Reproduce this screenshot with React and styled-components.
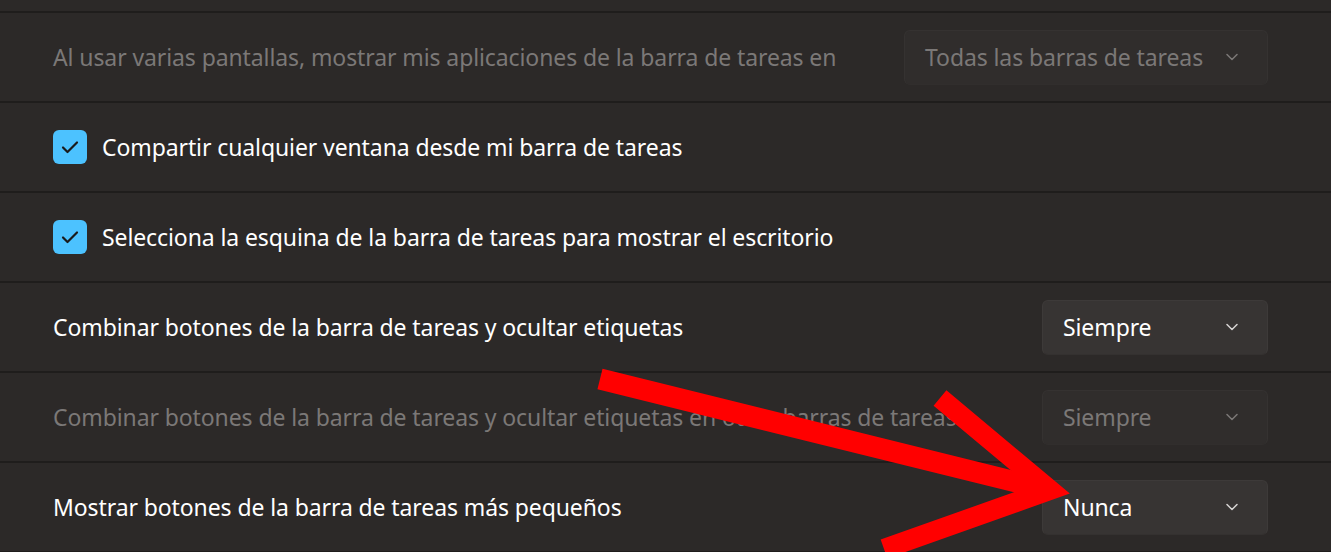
import React from "react";
import styled, { createGlobalStyle } from "styled-components";

const GlobalStyle = createGlobalStyle`
  html, body {
    margin: 0;
    padding: 0;
    background: #1f1d1c;
  }
  body {
    font-family: "Noto Sans", "Open Sans", "Liberation Sans", sans-serif;
    -webkit-font-smoothing: antialiased;
  }
`;

const Page = styled.div`
  position: relative;
  width: 1331px;
  height: 552px;
  overflow: hidden;
  background: #1f1d1c;
`;

const List = styled.div`
  display: flex;
  flex-direction: column;
  gap: 2px;
`;

const CardTail = styled.div`
  height: 11px;
  background: #2c2928;
`;

const Row = styled.div`
  height: 88px;
  box-sizing: border-box;
  padding: 0 63px 0 53px;
  display: flex;
  align-items: center;
  justify-content: space-between;
  background: #2c2928;
`;

const Left = styled.div`
  display: flex;
  align-items: center;
  gap: 15px;
`;

const Label = styled.span`
  font-size: 23px;
  letter-spacing: -0.1px;
  color: ${(p) => (p.$disabled ? "#7b7877" : "#ffffff")};
  white-space: nowrap;
`;

const Check = styled.span`
  width: 34px;
  height: 34px;
  border-radius: 6px;
  background: #4cc2ff;
  display: flex;
  align-items: center;
  justify-content: center;
  flex: none;
`;

const Select = styled.div`
  width: ${(p) => p.$width}px;
  height: 55px;
  box-sizing: border-box;
  display: flex;
  align-items: center;
  padding: 0 29px 0 20px;
  border-radius: 6px;
  border: 1px solid ${(p) => (p.$disabled ? "#353231" : "#3d3a39")};
  border-bottom-color: ${(p) => (p.$disabled ? "#312e2d" : "#343130")};
  background: ${(p) => (p.$disabled ? "#302d2c" : "#373433")};
  flex: none;
`;

const SelectText = styled.span`
  font-size: 23px;
  letter-spacing: -0.1px;
  color: ${(p) => (p.$disabled ? "#7b7877" : "#ffffff")};
  white-space: nowrap;
`;

const Chevron = styled.svg`
  margin-left: auto;
  width: 12px;
  height: 8px;
  flex: none;
`;

const Overlay = styled.svg`
  position: absolute;
  left: 0;
  top: 0;
  width: 1331px;
  height: 552px;
  pointer-events: none;
`;

const CheckIcon = () => (
  <Check>
    <svg width="18" height="14" viewBox="0 0 18 14">
      <path d="M2 7.5 L6.5 12 L16 2.5" fill="none" stroke="#1a1a1a" strokeWidth="2.2" strokeLinecap="round" strokeLinejoin="round" />
    </svg>
  </Check>
);

const Dropdown = ({ value, width, disabled }) => (
  <Select $width={width} $disabled={disabled}>
    <SelectText $disabled={disabled}>{value}</SelectText>
    <Chevron viewBox="0 0 12 8">
      <path d="M1 1.5 L6 6.5 L11 1.5" fill="none" stroke={disabled ? "#7b7877" : "#d6d4d3"} strokeWidth="1.5" strokeLinecap="round" strokeLinejoin="round" />
    </Chevron>
  </Select>
);

const rows = [
  { text: "Al usar varias pantallas, mostrar mis aplicaciones de la barra de tareas en", disabled: true, select: "Todas las barras de tareas", width: 364 },
  { text: "Compartir cualquier ventana desde mi barra de tareas", check: true },
  { text: "Selecciona la esquina de la barra de tareas para mostrar el escritorio", check: true },
  { text: "Combinar botones de la barra de tareas y ocultar etiquetas", select: "Siempre", width: 226 },
  { text: "Combinar botones de la barra de tareas y ocultar etiquetas en otras barras de tareas", disabled: true, select: "Siempre", width: 226 },
  { text: "Mostrar botones de la barra de tareas más pequeños", select: "Nunca", width: 226 },
];

const App = () => {
  return (
    <Page>
      <GlobalStyle />
      <List>
        <CardTail />
        {rows.map((r, i) => (
          <Row key={i}>
            <Left>
              {r.check && <CheckIcon />}
              <Label $disabled={r.disabled}>{r.text}</Label>
            </Left>
            {r.select && <Dropdown value={r.select} width={r.width} disabled={r.disabled} />}
          </Row>
        ))}
      </List>

      {/* red arrow drawn over the screenshot */}
      <Overlay viewBox="0 0 1331 552">
        <line x1="600" y1="379" x2="1040" y2="488" stroke="#ff0000" strokeWidth="21" />
        <polyline points="940,398 1050,490 884,549" fill="none" stroke="#ff0000" strokeWidth="20" strokeLinejoin="miter" strokeMiterlimit="10" />
      </Overlay>
    </Page>
  );
};

export default App;
